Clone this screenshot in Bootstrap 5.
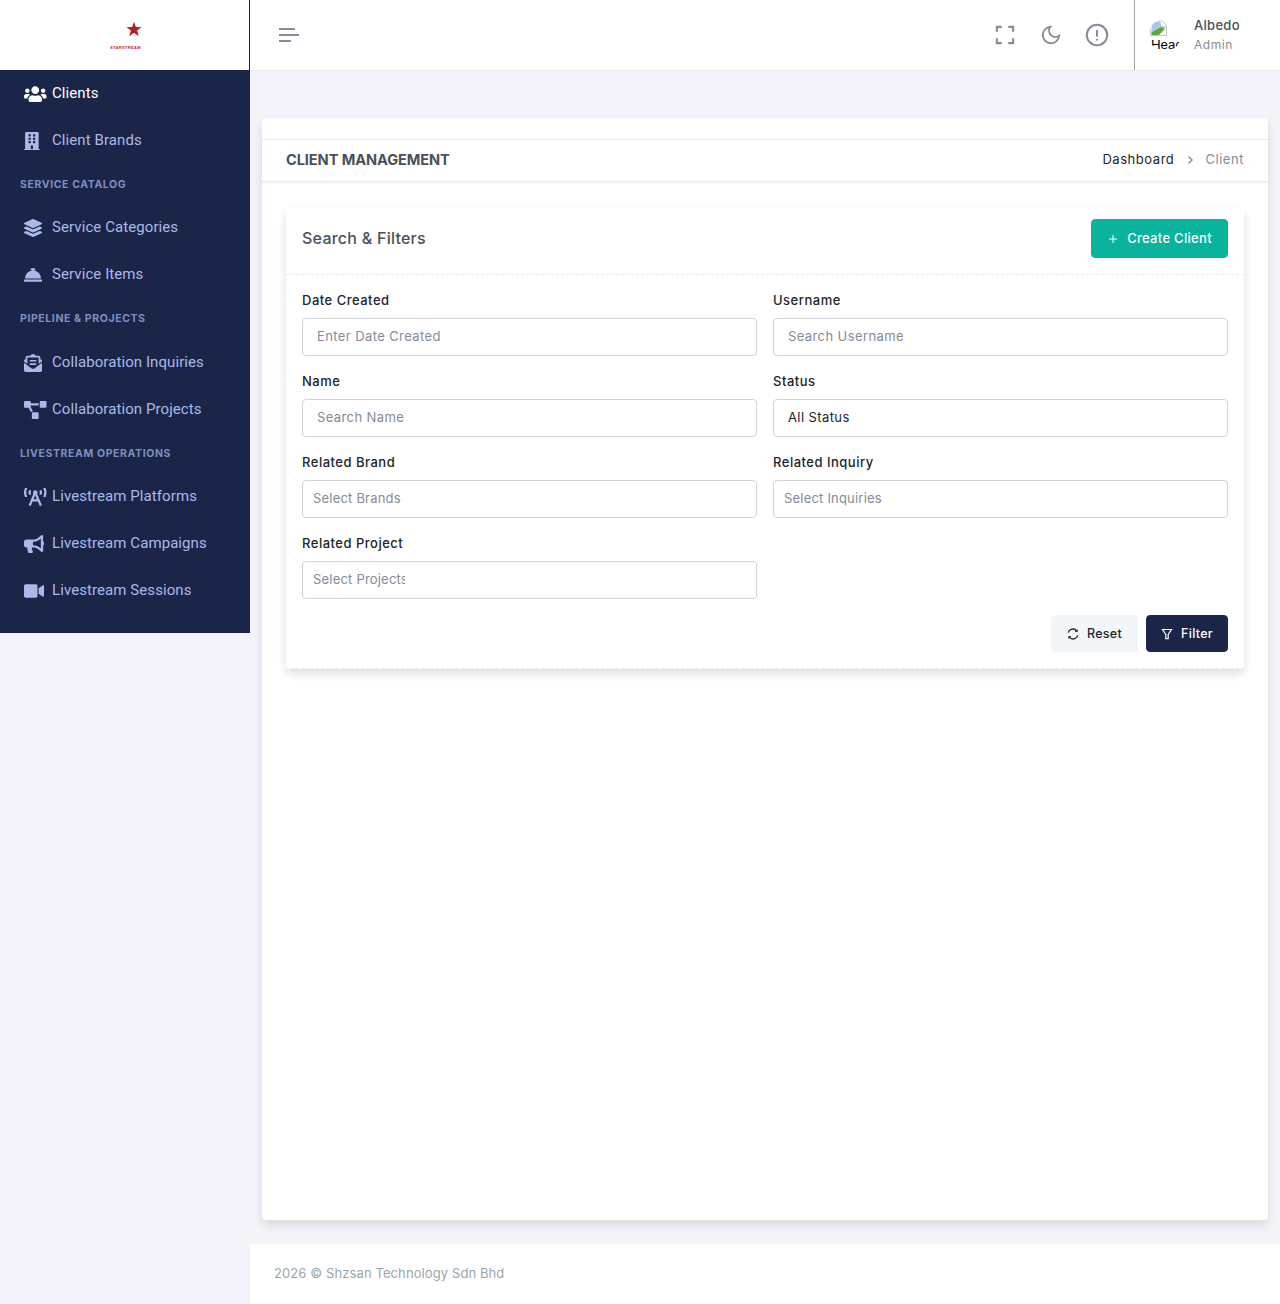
<!DOCTYPE html>
<html lang="en">
<head>
<meta charset="utf-8">
<title>Client Management</title>
<link rel="stylesheet" href="https://cdn.jsdelivr.net/npm/bootstrap@5.3.0/dist/css/bootstrap.min.css">
<style>
:root{--navy:#1a2548;--side:#abb9e8;--muted:#878a99;--line:#e9ebec;--page:#f3f3f9;}
html,body{margin:0;height:1304px;}
body{background:var(--page);font-family:Inter,"Open Sans",sans-serif;font-size:13px;color:#212529;}
.shell{height:1304px;}
.side-col{width:250px;flex:0 0 250px;}
.logo-box{height:70px;background:#fff;border-right:1px solid var(--navy);}
.logo-star{width:16px;height:16px;margin-left:18px;display:block;}
.logo-word{font-family:"Liberation Sans",sans-serif;font-weight:700;font-size:4px;line-height:5px;color:#c41f2f;letter-spacing:.35px;margin-top:8px;margin-left:2px;}
.side-panel{background:var(--navy);padding-bottom:19px;font-family:Roboto,Inter,sans-serif;}
.side-link{height:47px;padding:0 0 0 24px;color:var(--side);font-size:15px;letter-spacing:.08px;text-decoration:none;display:flex;align-items:center;}
.side-link.current{color:#fff;}
.side-link svg{height:18px;fill:currentColor;flex:none;}
.ico-slot{width:28px;flex:none;display:flex;align-items:center;}
.side-head{height:40px;padding:2px 0 0 20px;display:flex;align-items:center;color:#7f8fc0;font-family:Inter,sans-serif;font-size:10.5px;font-weight:700;letter-spacing:.6px;text-transform:uppercase;}
.side-head-tall{height:41px;padding-top:0;}
.top-bar{height:71px;flex:none;background:#fff;border-bottom:1px solid var(--line);}
.burger{margin-left:29px;width:20px;height:14px;}
.top-icon{stroke:#878a99;fill:none;stroke-width:2;}
.ico-expand{margin-right:22px;}
.ico-moon{margin-right:23px;}
.user-box{width:146px;height:70px;margin-left:25px;border-left:1px solid #a3a3a3;padding-left:15px;}
.avatar-clip{width:30px;height:30px;border-radius:12px;overflow:hidden;font-family:"Liberation Sans",sans-serif;font-size:13.3px;line-height:16px;color:#000;flex:none;}
.avatar-clip svg{display:block;}
.avatar-alt{margin-top:1px;white-space:nowrap;margin-left:1px;}
.who-box{margin-left:14px;}
.who-name{font-size:13px;font-weight:500;color:#495057;line-height:19px;letter-spacing:.3px;}
.who-role{font-size:12px;color:var(--muted);line-height:19px;letter-spacing:.55px;}
.work{padding:47px 12px 24px;}
.main-card{border:0;border-radius:4px;box-shadow:0 5px 10px rgba(30,32,37,.12);}
.strip{height:22px;border-bottom:1px solid var(--line);}
.title-bar{height:42px;padding:0 24px;border-bottom:1px solid var(--line);box-shadow:0 1px 2px rgba(56,65,74,.08);}
.page-title{font-size:14.6px;font-weight:700;color:#495057;margin:0;letter-spacing:-.1px;}
.crumbs{margin:-2px 0 0;font-size:13px;letter-spacing:.55px;}
.crumbs a{color:#212529;text-decoration:none;}
.crumbs .crumb-now{color:var(--muted);}
.crumbs svg{margin:0 11px 0 13px;}
.card-zone{padding:26px 24px 0;}
.filter-card{border:0;border-radius:4px;box-shadow:0 5px 10px rgba(30,32,37,.14);}
.filter-head{height:67px;padding:11px 16px 16px;background:#fff;border-bottom:1px dashed var(--line);}
.filter-title{font-size:16px;font-weight:500;color:#495057;margin:0;letter-spacing:.25px;}
.btn-create{background:#0ab39c;border-color:#0ab39c;color:#fff;font-size:13px;font-weight:500;height:39px;width:137px;padding:0;border-radius:4px;letter-spacing:.3px;}
.form-body{padding:15px 16px 16px;border-bottom:1px dashed var(--line);}
.fld-label{display:block;font-size:13px;font-weight:500;color:#212529;line-height:20px;margin:0 0 8px;letter-spacing:.5px;}
.fld{height:38px;border:1px solid #ced4da;border-radius:4px;font-size:13px;padding:0 14px 2px;color:#212529;background-image:none;letter-spacing:.4px;}
.fld-select{padding-bottom:0;}
.fld::placeholder,.tom-input::placeholder{color:var(--muted);opacity:1;}
.tom-box{height:38px;border:1px solid #ced4da;border-radius:4px;padding:0 10px;display:flex;align-items:center;background:#fff;}
.tom-input{border:0;outline:0;padding:0;font-size:13px;width:92px;height:20px;margin-top:-3px;background:transparent;letter-spacing:.2px;}
.tom-wide{width:110px;}
.fld-gap{row-gap:15px;}
.btn-row{margin-top:16px;}
.btn-soft,.btn-navy{height:37px;font-size:12.5px;font-weight:500;padding:1px 0 0;border-radius:4px;letter-spacing:.3px;}
.btn-soft{background:#f3f6f9;border-color:#f3f6f9;color:#212529;width:87px;}
.btn-navy{background:var(--navy);border-color:var(--navy);color:#fff;width:82px;}
.page-foot{height:60px;flex:none;background:#fff;padding-left:24px;color:#98a6ad;font-size:13px;letter-spacing:.1px;}
</style>
</head>
<body>
<div class="shell d-flex">
  <aside class="side-col">
    <div class="logo-box d-flex flex-column align-items-center justify-content-center">
      <svg class="logo-star" viewBox="0 0 24 24" aria-hidden="true"><polygon fill="#b71c2b" points="12,1 14.8,9 23.5,9.2 16.6,14.4 19.1,22.8 12,17.8 4.9,22.8 7.4,14.4 .5,9.2 9.2,9"/></svg>
      <div class="logo-word">STARSTREAM</div>
    </div>
    <nav class="side-panel">
      <a class="side-link current" href="#"><span class="ico-slot"><svg viewBox="0 0 640 512"><path d="M96 224c35.3 0 64-28.7 64-64s-28.7-64-64-64-64 28.7-64 64 28.7 64 64 64zm448 0c35.3 0 64-28.7 64-64s-28.7-64-64-64-64 28.7-64 64 28.7 64 64 64zm32 32h-64c-17.6 0-33.5 7.1-45.1 18.6 40.3 22.1 68.9 62 75.1 109.4h66c17.7 0 32-14.3 32-32v-32c0-35.3-28.7-64-64-64zm-256 0c61.9 0 112-50.1 112-112S381.9 32 320 32 208 82.1 208 144s50.1 112 112 112zm76.8 32h-8.3c-20.8 10-43.9 16-68.5 16s-47.6-6-68.5-16h-8.3C179.6 288 128 339.6 128 403.2V432c0 26.5 21.5 48 48 48h288c26.5 0 48-21.5 48-48v-28.8c0-63.6-51.6-115.2-115.2-115.2zm-223.7-13.4C161.5 263.1 145.6 256 128 256H64c-35.3 0-64 28.7-64 64v32c0 17.7 14.3 32 32 32h65.9c6.3-47.4 34.9-87.3 75.2-109.4z"/></svg></span>Clients</a>
      <a class="side-link" href="#"><span class="ico-slot"><svg viewBox="0 0 448 512"><path d="M436 480h-20V24c0-13.255-10.745-24-24-24H56C42.745 0 32 10.745 32 24v456H12c-6.627 0-12 5.373-12 12v20h448v-20c0-6.627-5.373-12-12-12zM128 76c0-6.627 5.373-12 12-12h40c6.627 0 12 5.373 12 12v40c0 6.627-5.373 12-12 12h-40c-6.627 0-12-5.373-12-12V76zm0 96c0-6.627 5.373-12 12-12h40c6.627 0 12 5.373 12 12v40c0 6.627-5.373 12-12 12h-40c-6.627 0-12-5.373-12-12v-40zm52 148h-40c-6.627 0-12-5.373-12-12v-40c0-6.627 5.373-12 12-12h40c6.627 0 12 5.373 12 12v40c0 6.627-5.373 12-12 12zm76 160h-64v-84c0-6.627 5.373-12 12-12h40c6.627 0 12 5.373 12 12v84zm64-172c0 6.627-5.373 12-12 12h-40c-6.627 0-12-5.373-12-12v-40c0-6.627 5.373-12 12-12h40c6.627 0 12 5.373 12 12v40zm0-96c0 6.627-5.373 12-12 12h-40c-6.627 0-12-5.373-12-12v-40c0-6.627 5.373-12 12-12h40c6.627 0 12 5.373 12 12v40zm0-96c0 6.627-5.373 12-12 12h-40c-6.627 0-12-5.373-12-12V76c0-6.627 5.373-12 12-12h40c6.627 0 12 5.373 12 12v40z"/></svg></span>Client Brands</a>
      <div class="side-head">Service Catalog</div>
      <a class="side-link" href="#"><span class="ico-slot"><svg viewBox="0 0 512 512"><path d="M12.41 148.02l232.94 105.67c6.8 3.09 14.49 3.09 21.29 0l232.94-105.67c16.55-7.51 16.55-32.52 0-40.03L266.65 2.31a25.607 25.607 0 0 0-21.29 0L12.41 107.98c-16.55 7.51-16.55 32.53 0 40.04zm487.18 88.28l-58.09-26.33-161.64 73.27c-7.56 3.43-15.59 5.17-23.86 5.17s-16.29-1.74-23.86-5.17L70.51 209.97l-58.1 26.33c-16.55 7.5-16.55 32.5 0 40l232.94 105.59c6.8 3.08 14.49 3.08 21.29 0L499.59 276.3c16.55-7.5 16.55-32.5 0-40zm0 127.8l-57.87-26.23-161.86 73.37c-7.56 3.43-15.59 5.17-23.86 5.17s-16.29-1.74-23.86-5.17L70.29 337.87 12.41 364.1c-16.55 7.5-16.55 32.5 0 40l232.94 105.59c6.8 3.08 14.49 3.08 21.29 0L499.59 404.1c16.55-7.5 16.55-32.5 0-40z"/></svg></span>Service Categories</a>
      <a class="side-link" href="#"><span class="ico-slot"><svg viewBox="0 0 512 512"><path d="M288 130.54V112h16c8.84 0 16-7.16 16-16V80c0-8.84-7.16-16-16-16h-96c-8.84 0-16 7.16-16 16v16c0 8.84 7.16 16 16 16h16v18.54C115.49 146.11 32 239.18 32 352h448c0-112.82-83.49-205.89-192-221.46zM496 384H16c-8.84 0-16 7.16-16 16v32c0 8.84 7.16 16 16 16h480c8.84 0 16-7.16 16-16v-32c0-8.84-7.16-16-16-16z"/></svg></span>Service Items</a>
      <div class="side-head side-head-tall">Pipeline &amp; Projects</div>
      <a class="side-link" href="#"><span class="ico-slot"><svg viewBox="0 0 512 512"><path d="M176 216h160c8.84 0 16-7.16 16-16v-16c0-8.84-7.16-16-16-16H176c-8.84 0-16 7.16-16 16v16c0 8.84 7.16 16 16 16zm-16 80c0 8.84 7.16 16 16 16h160c8.84 0 16-7.16 16-16v-16c0-8.84-7.16-16-16-16H176c-8.84 0-16 7.16-16 16v16zm96 121.13c-16.42 0-32.84-5.06-46.86-15.19L0 250.86V464c0 26.51 21.49 48 48 48h416c26.51 0 48-21.49 48-48V250.86L302.86 401.94c-14.02 10.12-30.44 15.19-46.86 15.19zm237.61-254.18c-8.85-6.94-17.24-13.47-29.61-22.81V96c0-26.51-21.49-48-48-48h-77.55c-3.04-2.2-5.87-4.26-9.04-6.56C312.6 29.17 279.2-.35 256 0c-23.2-.35-56.59 29.17-73.41 41.44-3.17 2.3-6 4.36-9.04 6.56H96c-26.51 0-48 21.49-48 48v44.14c-12.37 9.33-20.76 15.87-29.61 22.81A47.995 47.995 0 0 0 0 200.72v10.65l96 69.35V96h320v184.72l96-69.35v-10.65c0-14.74-6.78-28.67-18.39-37.77z"/></svg></span>Collaboration Inquiries</a>
      <a class="side-link" href="#"><span class="ico-slot"><svg viewBox="0 0 640 512"><path d="M384 320H256c-17.67 0-32 14.33-32 32v128c0 17.67 14.33 32 32 32h128c17.67 0 32-14.33 32-32V352c0-17.67-14.33-32-32-32zM192 32c0-17.67-14.33-32-32-32H32C14.33 0 0 14.33 0 32v128c0 17.67 14.33 32 32 32h95.72l73.16 128.04C211.98 300.98 232.4 288 256 288h.28L192 175.51V128h224V64H192V32zM608 0H480c-17.67 0-32 14.33-32 32v128c0 17.67 14.33 32 32 32h128c17.67 0 32-14.33 32-32V32c0-17.67-14.33-32-32-32z"/></svg></span>Collaboration Projects</a>
      <div class="side-head">Livestream Operations</div>
      <a class="side-link" href="#"><span class="ico-slot"><svg viewBox="0 0 640 512"><path d="M150.94 192h33.73c11.01 0 18.61-10.83 14.86-21.18-4.93-13.58-7.55-27.98-7.55-42.82s2.62-29.24 7.55-42.82C203.29 74.83 195.68 64 184.67 64h-33.73c-7.01 0-13.46 4.49-15.41 11.23C130.64 92.21 128 109.88 128 128c0 18.12 2.64 35.79 7.54 52.76 1.94 6.74 8.39 11.24 15.4 11.24zM89.92 23.34C95.56 12.72 87.97 0 75.96 0H40.63c-6.27 0-12.14 3.59-14.74 9.31C9.4 45.54 0 85.65 0 128c0 24.75 3.12 68.33 26.69 118.86 2.62 5.63 8.42 9.14 14.61 9.14h34.84c12.02 0 19.61-12.74 13.95-23.37-49.78-93.32-16.71-178.15-.17-209.29zM614.06 9.29C611.46 3.58 605.6 0 599.33 0h-35.42c-11.98 0-19.66 12.66-14.02 23.25 18.27 34.29 48.42 119.42.28 209.23-5.72 10.68 1.8 23.52 13.91 23.52h35.23c6.27 0 12.13-3.58 14.73-9.29C630.57 210.48 640 170.36 640 128s-9.42-82.48-25.94-118.71zM489.17 64h-33.73c-11.01 0-18.61 10.83-14.86 21.18 4.93 13.58 7.55 27.98 7.55 42.82s-2.62 29.24-7.55 42.82c-3.76 10.35 3.85 21.18 14.86 21.18h33.73c7.02 0 13.46-4.49 15.41-11.24 4.9-16.97 7.53-34.64 7.53-52.76 0-18.12-2.64-35.79-7.54-52.76-1.94-6.75-8.39-11.24-15.4-11.24zm-116.3 100.12c7.05-10.29 11.2-22.71 11.2-36.12 0-35.35-28.63-64-63.96-64-35.32 0-63.96 28.65-63.96 64 0 13.41 4.15 25.83 11.2 36.12l-130.5 313.41c-3.4 8.15.46 17.52 8.61 20.92l29.51 12.31c8.15 3.4 17.52-.46 20.91-8.61L244.96 384h150.07l49.2 118.15c3.39 8.16 12.76 12.01 20.91 8.61l29.51-12.31c8.15-3.4 12-12.77 8.61-20.92l-130.39-313.41zM271.62 320l48.49-116.44L368.55 320h-96.93z"/></svg></span>Livestream Platforms</a>
      <a class="side-link" href="#"><span class="ico-slot"><svg viewBox="0 0 576 512"><path d="M576 240c0-23.63-12.95-44.04-32-55.12V32.01C544 23.26 537.02 0 512 0c-7.12 0-14.19 2.38-19.98 7.02l-85.03 68.03C364.28 109.19 310.66 128 256 128H64c-35.35 0-64 28.65-64 64v96c0 35.35 28.65 64 64 64h33.7c-1.39 10.48-2.18 21.14-2.18 32 0 39.77 9.26 77.35 25.56 110.94 5.19 10.69 16.52 17.06 28.4 17.06h74.28c26.05 0 41.69-29.84 25.9-50.56-16.4-21.52-26.15-48.36-26.15-77.44 0-11.11 1.62-21.79 4.41-32H256c54.66 0 108.28 18.81 150.98 52.95l85.03 68.03a32.023 32.023 0 0 0 19.98 7.02c24.92 0 32-22.78 32-32V295.13C563.05 284.04 576 263.63 576 240zm-96 141.42l-33.05-26.44C392.95 311.78 325.12 288 256 288v-96c69.12 0 136.95-23.78 190.95-66.98L480 98.58v282.84z"/></svg></span>Livestream Campaigns</a>
      <a class="side-link" href="#"><span class="ico-slot"><svg viewBox="0 0 576 512"><path d="M336.2 64H47.8C21.4 64 0 85.4 0 111.8v288.4C0 426.6 21.4 448 47.8 448h288.4c26.4 0 47.8-21.4 47.8-47.8V111.8c0-26.4-21.4-47.8-47.8-47.8zm189.4 37.7L416 177.3v157.4l109.6 75.5c21.2 14.6 50.4-.3 50.4-25.8V127.5c0-25.4-29.1-40.4-50.4-25.8z"/></svg></span>Livestream Sessions</a>
    </nav>
  </aside>
  <div class="d-flex flex-column flex-grow-1">
    <header class="top-bar d-flex align-items-center">
      <svg class="burger top-icon" viewBox="0 0 20 14" aria-hidden="true"><path d="M0 1h16M0 7h20M0 13h12"/></svg>
      <div class="d-flex align-items-center ms-auto">
        <svg class="top-icon ico-expand" width="26" height="26" viewBox="0 0 24 24" aria-hidden="true"><path d="M4.500 9V4.500H9M15 4.500h4.500V9M19.500 15v4.500H15M9 19.500H4.500V15"/></svg>
        <svg class="top-icon ico-moon" width="22" height="22" viewBox="0 0 24 24" aria-hidden="true"><path d="M21 12.790A9 9 0 1 1 11.210 3 7 7 0 0 0 21 12.790z"/></svg>
        <svg class="top-icon" width="24" height="24" viewBox="0 0 24 24" aria-hidden="true"><circle cx="12" cy="12" r="10.200"/><path d="M12 7v6.500M12 16v1.600"/></svg>
        <div class="user-box d-flex align-items-center">
          <div class="avatar-clip">
            <svg width="17" height="16" viewBox="0 0 17 16" aria-hidden="true"><path fill="#fff" stroke="#c4c4c4" d="M.5.500h11l5 5v10H.5z"/><path fill="#a9c5ef" d="M1.500 1.500h9l.5 4.500 5 .500v1L1.500 13z"/><path fill="#5fa83a" d="M1.500 15v-2.500L11 7l4 2-6 6z"/></svg>
            <div class="avatar-alt">Header</div>
          </div>
          <div class="who-box">
            <div class="who-name">Albedo</div>
            <div class="who-role">Admin</div>
          </div>
        </div>
      </div>
    </header>
    <main class="work flex-grow-1 d-flex flex-column">
      <div class="card main-card flex-grow-1">
        <div class="strip"></div>
        <div class="title-bar d-flex align-items-center justify-content-between">
          <h4 class="page-title text-uppercase">Client Management</h4>
          <div class="crumbs d-flex align-items-center">
            <a href="#">Dashboard</a>
            <svg width="7" height="10" viewBox="0 0 7 10" aria-hidden="true"><path d="M1.500 1.500 5 5 1.500 8.500" fill="none" stroke="#878a99" stroke-width="1.400"/></svg>
            <span class="crumb-now">Client</span>
          </div>
        </div>
        <div class="card-zone">
          <div class="card filter-card">
            <div class="filter-head d-flex align-items-center justify-content-between">
              <h5 class="filter-title">Search &amp; Filters</h5>
              <button type="button" class="btn btn-create d-flex align-items-center justify-content-center gap-2">
                <svg width="12" height="12" viewBox="0 0 12 12" aria-hidden="true"><path d="M6 2v8M2 6h8" stroke="#fff" fill="none"/></svg>Create Client
              </button>
            </div>
            <div class="form-body">
              <div class="row gx-3 fld-gap">
                <div class="col-6"><label class="fld-label">Date Created</label><input class="form-control fld" placeholder="Enter Date Created"></div>
                <div class="col-6"><label class="fld-label">Username</label><input class="form-control fld" placeholder="Search Username"></div>
                <div class="col-6"><label class="fld-label">Name</label><input class="form-control fld" placeholder="Search Name"></div>
                <div class="col-6"><label class="fld-label">Status</label><select class="form-select fld fld-select"><option>All Status</option></select></div>
                <div class="col-6"><label class="fld-label">Related Brand</label><div class="tom-box"><input class="tom-input" placeholder="Select Brands"></div></div>
                <div class="col-6"><label class="fld-label">Related Inquiry</label><div class="tom-box"><input class="tom-input tom-wide" placeholder="Select Inquiries"></div></div>
                <div class="col-6"><label class="fld-label">Related Project</label><div class="tom-box"><input class="tom-input" placeholder="Select Projects"></div></div>
              </div>
              <div class="btn-row d-flex justify-content-end gap-2">
                <button type="button" class="btn btn-soft d-flex align-items-center justify-content-center gap-2">
                  <svg width="12" height="12" viewBox="0 0 12 12" aria-hidden="true"><path d="M1.200 4.600A5 5 0 0 1 9.800 2.800M10.800 7.400A5 5 0 0 1 2.200 9.200" fill="none" stroke="#212529" stroke-width="1.300"/><path d="M10.600 .9v3H7.700zM1.400 11.100v-3h2.900z" fill="#212529"/></svg>Reset
                </button>
                <button type="button" class="btn btn-navy d-flex align-items-center justify-content-center gap-2">
                  <svg width="12" height="12" viewBox="0 0 12 12" aria-hidden="true"><path d="M1.500 1.500h9L7.200 6.500v4.200H4.800V6.500z" fill="none" stroke="#fff" stroke-width="1.200"/></svg>Filter
                </button>
              </div>
            </div>
          </div>
        </div>
      </div>
    </main>
    <footer class="page-foot d-flex align-items-center">2026 © Shzsan Technology Sdn Bhd</footer>
  </div>
</div>
<script src="https://cdn.jsdelivr.net/npm/bootstrap@5.3.0/dist/js/bootstrap.bundle.min.js"></script>
</body>
</html>
